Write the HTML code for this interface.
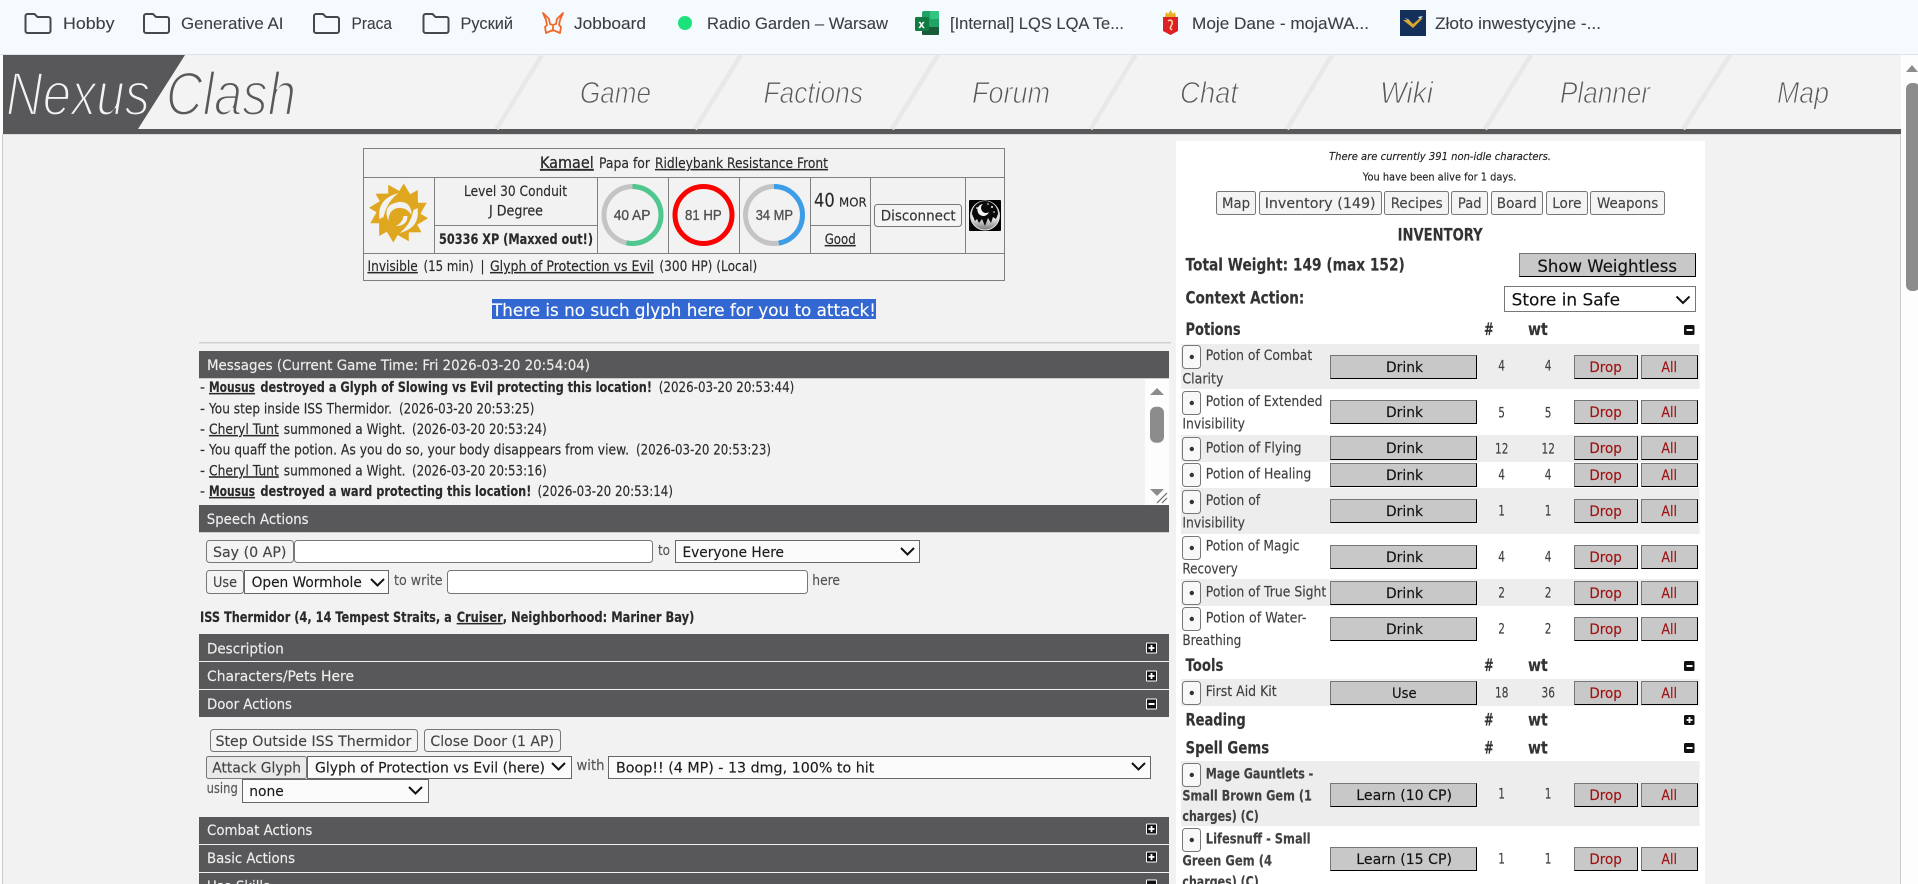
<!DOCTYPE html>
<html lang="en"><head><meta charset="utf-8"><title>Nexus Clash</title>
<style>
html,body{margin:0;padding:0;width:1918px;height:884px;overflow:hidden;background:#f2f2f2}
svg{display:block;position:absolute;left:0;top:0}
text{font-family:"DejaVu Sans","Noto Sans CJK SC",sans-serif;font-size:14px;color:#2a2a2a;fill:currentColor;stroke:currentColor;stroke-width:.15px;white-space:pre}
.bm{font-family:"Liberation Sans",sans-serif;font-size:16.500px;color:#3c4043;stroke-width:.1px}
.nav{font-family:"Liberation Sans",sans-serif;font-style:italic;font-size:31px;fill:#58585a;stroke:#f3f3f3;stroke-width:.95px}
.bar{fill:#58585a}
.bt{color:#eee;font-size:14.500px}
.b{font-weight:bold}
.u{text-decoration:underline}
.ring{font-family:"Liberation Sans",sans-serif;font-size:15px;color:#505050;stroke-width:.35px}
.ctl{font-size:14.500px;color:#1c1c1c}
.btn{font-size:14.500px;color:#444}
.h{font-weight:bold;font-size:16.500px;color:#333}
.i{color:#404040}
.c{color:#404040}
.r{color:#a01010;font-size:14.500px}
.k{color:#111;font-size:14.500px}
.box{fill:#f4f4f4;stroke:#777}
.inp{fill:#fff;stroke:#777}
.sel{fill:#fbfbfb;stroke:#666}
.chev{fill:none;stroke:#111;stroke-width:2}
</style></head><body>
<svg xmlns="http://www.w3.org/2000/svg" width="1918" height="884" viewBox="0 0 1918 884">
<defs>
<g id="fo"><path d="M1 4a2 2 0 0 1 2-2h7l3 3h11a2 2 0 0 1 2 2v12a2 2 0 0 1-2 2H3a2 2 0 0 1-2-2z" fill="none" stroke="#45494d" stroke-width="2"/></g>
<g id="bb">
<rect x="1330.500" y=".5" width="146" height="23" fill="#c8c8c8" stroke="#767676"/><path d="M1476.500 .5V23.500H1330.500" fill="none" stroke="#000"/>
<rect x="1574.500" y=".5" width="63" height="23" fill="#c8c8c8" stroke="#767676"/><path d="M1637.500 .5V23.500H1574.500" fill="none" stroke="#000"/>
<rect x="1641.500" y=".5" width="56" height="23" fill="#c8c8c8" stroke="#767676"/><path d="M1697.500 .5V23.500H1641.500" fill="none" stroke="#000"/>
</g>
<g id="sb"><rect x="1182.500" y=".5" width="18" height="23" rx="3" fill="#f8f8f8" stroke="#777"/><circle cx="1191.800" cy="12" r="2.200" fill="#333"/></g>
<g id="pl"><rect x="-.5" y="-.5" width="11" height="11" rx="1" fill="#fff"/><rect x=".5" y=".5" width="9" height="9" fill="#111"/><path d="M2 5h6M5 2v6" stroke="#fff" stroke-width="1.800"/></g>
<g id="mi"><rect x="-.5" y="-.5" width="11" height="11" rx="1" fill="#fff"/><rect x=".5" y=".5" width="9" height="9" fill="#111"/><path d="M2 5h6" stroke="#fff" stroke-width="2"/></g>
<g id="plr"><rect x="-.5" y="0" width="10.500" height="10" rx="1.500" fill="#111"/><path d="M2 5h6M5 2v6" stroke="#fff" stroke-width="1.800"/></g>
<g id="mir"><rect x="-.5" y="0" width="10.500" height="10" rx="1.500" fill="#111"/><path d="M2 5h6" stroke="#fff" stroke-width="2"/></g>
<linearGradient id="moon" x1="0" y1="0" x2="0" y2="1"><stop offset="0" stop-color="#999"/><stop offset=".6" stop-color="#e8e8e8"/><stop offset="1" stop-color="#777"/></linearGradient>
</defs>

<!-- browser bookmarks bar -->
<rect width="1918" height="54" fill="#f4fafd"/><rect y="54" width="1918" height="1.500" fill="#dbe4e8"/>
<use href="#fo" x="24.500" y="12"/><text class="bm" x="63" y="29" textLength="51.500" lengthAdjust="spacingAndGlyphs">Hobby</text>
<use href="#fo" x="143" y="12"/><text class="bm" x="181" y="29" textLength="102.500" lengthAdjust="spacingAndGlyphs">Generative AI</text>
<use href="#fo" x="313" y="12"/><text class="bm" x="351.500" y="29" textLength="40.500" lengthAdjust="spacingAndGlyphs">Praca</text>
<use href="#fo" x="422.500" y="12"/><text class="bm" x="460.500" y="29" textLength="52.500" lengthAdjust="spacingAndGlyphs">Руский</text>
<path d="M543 13l3 7 1 5-2 2 1 6 7-3 7 3 1-6-2-2 1-5 3-7-6 6-1 5-3 1-3-1-1-5z M553 26v5" fill="none" stroke="#f2682a" stroke-width="1.800" stroke-linejoin="round"/>
<text class="bm" x="574" y="29" textLength="72" lengthAdjust="spacingAndGlyphs">Jobboard</text>
<circle cx="685" cy="23" r="7" fill="#1de27c"/>
<text class="bm" x="707" y="29" textLength="181" lengthAdjust="spacingAndGlyphs">Radio Garden – Warsaw</text>
<rect x="922" y="11" width="17" height="24" rx="2" fill="#21a366"/><rect x="930" y="11" width="9" height="8" rx="1" fill="#33c481"/><rect x="922" y="27" width="17" height="8" rx="1" fill="#185c37"/>
<rect x="915" y="17" width="14" height="14" rx="1.500" fill="#107c41"/><text x="918.500" y="28" style="font-size:11px;color:#fff;font-family:'Liberation Sans',sans-serif;font-weight:bold">x</text>
<text class="bm" x="950" y="29" textLength="174" lengthAdjust="spacingAndGlyphs">[Internal] LQS LQA Te...</text>
<path d="M1165 17l1-5 2 2 2.500-4 2.500 4 2-2 1 5z" fill="#e8b020"/>
<path d="M1163 17h15v14l-7.500 4-7.500-4z" fill="#dd1f26"/><path d="M1168 21c3-2 5 0 4 3s-3 4 0 6" fill="none" stroke="#f3d9a0" stroke-width="1.600"/>
<text class="bm" x="1192" y="29" textLength="177" lengthAdjust="spacingAndGlyphs">Moje Dane - mojaWA...</text>
<rect x="1400" y="10" width="26" height="26" fill="#14305a"/><path d="M1403 20l10 8 10-10-4 1-6 5-4-4z" fill="#d9a92b"/><path d="M1404 18l4 1 2 2z M1418 17l5-1-3 3z" fill="#dfe6ee"/>
<text class="bm" x="1435" y="29" textLength="166" lengthAdjust="spacingAndGlyphs">Złoto inwestycyjne -...</text>

<!-- page frame -->
<rect x="0" y="55" width="3" height="829" fill="#fcfcfc"/><rect x="2" y="134" width="1" height="750" fill="#ccc"/>
<rect x="3" y="55" width="1898" height="74" fill="#f3f3f3"/>
<rect x="3" y="129" width="1898" height="5" fill="#58585a"/><rect x="3" y="134" width="1898" height="1" fill="#dcdcdc"/>
<rect x="1900" y="135" width="1" height="749" fill="#ccc"/>
<g stroke="#e8e8e8" stroke-width="4.500">
<path d="M496.500 129L542 55M695 129L741 55M892 129L938 55M1090.500 129L1135.500 55M1287 129L1332 55M1485 129L1531 55M1683 129L1730 55"/>
</g>
<path d="M3 55H185L138 129H3z" fill="#58585a"/>
<text x="6" y="115" textLength="144" lengthAdjust="spacingAndGlyphs" style="font-family:'Liberation Sans',sans-serif;font-style:italic;font-size:61px;fill:#f3f3f3;stroke:#58585a;stroke-width:2.200px">Nexus</text>
<text x="166" y="115" textLength="130" lengthAdjust="spacingAndGlyphs" style="font-family:'Liberation Sans',sans-serif;font-style:italic;font-size:61px;fill:#58585a;stroke:#f3f3f3;stroke-width:2.200px">Clash</text>
<text class="nav" x="580" y="103" textLength="71" lengthAdjust="spacingAndGlyphs">Game</text>
<text class="nav" x="763.500" y="103" textLength="99.500" lengthAdjust="spacingAndGlyphs">Factions</text>
<text class="nav" x="972" y="103" textLength="78" lengthAdjust="spacingAndGlyphs">Forum</text>
<text class="nav" x="1180" y="103" textLength="58" lengthAdjust="spacingAndGlyphs">Chat</text>
<text class="nav" x="1380" y="103" textLength="53" lengthAdjust="spacingAndGlyphs">Wiki</text>
<text class="nav" x="1560" y="103" textLength="90" lengthAdjust="spacingAndGlyphs">Planner</text>
<text class="nav" x="1777" y="103" textLength="52" lengthAdjust="spacingAndGlyphs">Map</text>

<!-- main scrollbar -->
<rect x="1901" y="55" width="17" height="829" fill="#fdfdfd"/>
<path d="M1912 65l6 7h-12z" fill="#8c8c8c"/>
<rect x="1906" y="83" width="14" height="208" rx="6" fill="#8c8c8c"/>

<!-- status table -->
<g fill="none" stroke="#808080">
<rect x="363.500" y="148.500" width="641" height="132"/>
<path d="M364 177.500H1004M364 253.500H1004M434.500 178V253M597.500 178V253M668.500 178V253M739.500 178V253M810.500 178V253M870.500 178V253M965.500 178V253M435 225.500H597M811 225.500H870"/>
</g>
<text x="540" y="168" class="u" textLength="53.700" lengthAdjust="spacingAndGlyphs" style="font-size:16px;stroke-width:.3px">Kamael</text>
<text x="599" y="168" textLength="51" lengthAdjust="spacingAndGlyphs">Papa for</text>
<text x="655" y="168" class="u" textLength="173" lengthAdjust="spacingAndGlyphs">Ridleybank Resistance Front</text>

<g transform="translate(368.500,183)">
<path d="M35.200 .5L41.700 11.300 49.300 7 49.400 19.700 58.200 19.700 52 30.800 59.500 35.200 48.700 41.700 53 49.300 40.300 49.400 40.300 58.200 29.200 52 24.800 59.500 18.300 48.700 10.700 53 10.600 40.300 1.800 40.300 8 29.200 .5 24.800 11.300 18.300 7 10.700 19.700 10.600 19.700 1.800 30.800 8z" fill="#dfa71f"/>
<circle cx="30" cy="30" r="22" fill="#dfa71f"/>
<g fill="#f2f2f2">
<path d="M11 36Q8 16 30 10Q19 18 15 34z"/>
<path d="M49 25Q52 45 31 50Q42 42 45 27z"/>
<path d="M20 38Q13 22 30 19Q43 18 43 32Q38 24 29 25Q20 27 20 38z"/>
<path d="M39 33Q39 43 27 43Q34 40 35 33z"/>
</g>
</g>

<text x="464" y="196" textLength="103" lengthAdjust="spacingAndGlyphs">Level 30 Conduit</text>
<text x="489" y="215.300" textLength="54" lengthAdjust="spacingAndGlyphs">J Degree</text>
<text x="439" y="244" class="b" textLength="154" lengthAdjust="spacingAndGlyphs">50336 XP (Maxxed out!)</text>

<g fill="none" stroke-width="5">
<circle cx="632.500" cy="215" r="28.500" stroke="#c4c4c4"/>
<circle cx="632.500" cy="215" r="28.500" stroke="#4ec88e" stroke-dasharray="95.500 179.100" transform="rotate(-90 632.500 215)"/>
<circle cx="703.500" cy="215" r="28.500" stroke="#fe0000"/>
<circle cx="774" cy="215" r="28.500" stroke="#c4c4c4"/>
<circle cx="774" cy="215" r="28.500" stroke="#3d9ee8" stroke-dasharray="84.600 179.100" transform="rotate(-90 774 215)"/>
</g>
<text class="ring" x="613.700" y="220" textLength="36.700" lengthAdjust="spacingAndGlyphs">40 AP</text>
<text class="ring" x="685" y="220" textLength="36.700" lengthAdjust="spacingAndGlyphs">81 HP</text>
<text class="ring" x="755.700" y="220" textLength="37.300" lengthAdjust="spacingAndGlyphs">34 MP</text>
<text x="814" y="206.700" textLength="20.700" lengthAdjust="spacingAndGlyphs" style="font-size:19px">40</text>
<text x="839" y="206.700" textLength="27.700" lengthAdjust="spacingAndGlyphs" style="font-size:12.500px">MOR</text>
<text x="824.700" y="244" class="u" textLength="31" lengthAdjust="spacingAndGlyphs">Good</text>
<rect x="874.500" y="204.500" width="87" height="22" rx="3" class="box"/>
<text class="btn" x="880.700" y="220.700" textLength="75" lengthAdjust="spacingAndGlyphs" style="color:#333">Disconnect</text>

<rect x="969" y="200" width="32" height="31" rx="1" fill="#000"/>
<circle cx="985" cy="215.500" r="14.500" fill="url(#moon)" stroke="#ddd" stroke-width="1"/>
<path d="M972 214a13 13 0 0 1 26 0l-2 5-3-2-2 6-3-5-3 8-3-7-3 4-2-4-2 2z" fill="#0a0a0a"/>
<path d="M983 204a6 6 0 1 0 6 8a5 5 0 1 1-6-8z" fill="#f2f2f2"/>
<circle cx="992" cy="207" r="1" fill="#fff"/><circle cx="977" cy="208" r=".9" fill="#fff"/><circle cx="994" cy="212" r=".8" fill="#fff"/><circle cx="988" cy="204" r=".8" fill="#fff"/>

<text x="367.500" y="271" class="u" textLength="50.300" lengthAdjust="spacingAndGlyphs">Invisible</text>
<text x="423.500" y="271" textLength="50.200" lengthAdjust="spacingAndGlyphs">(15 min)</text>
<text x="480.500" y="271" textLength="4" lengthAdjust="spacingAndGlyphs">|</text>
<text x="490" y="271" class="u" textLength="163.700" lengthAdjust="spacingAndGlyphs">Glyph of Protection vs Evil</text>
<text x="659.400" y="271" textLength="97.900" lengthAdjust="spacingAndGlyphs">(300 HP) (Local)</text>

<!-- selected message -->
<rect x="492" y="299" width="384" height="20" fill="#3367d1"/>
<text x="492" y="316" textLength="384" lengthAdjust="spacingAndGlyphs" style="font-size:17px;color:#fff">There is no such glyph here for you to attack!</text>
<rect x="199" y="342" width="972" height="1.500" fill="#d0d0d0"/>

<!-- messages -->
<rect class="bar" x="199" y="351" width="970" height="27"/><rect x="199" y="378" width="970" height="1" fill="#ccc"/>
<text class="bt" x="207" y="370" textLength="383" lengthAdjust="spacingAndGlyphs">Messages (Current Game Time: Fri 2026-03-20 20:54:04)</text>
<rect x="1145" y="379" width="24" height="126" fill="#fdfdfd"/>
<path d="M1157 388l7 7h-14z" fill="#8c8c8c"/>
<rect x="1150" y="406.700" width="14" height="36" rx="6" fill="#8c8c8c"/>
<path d="M1150 489h14l-7 7z" fill="#8c8c8c"/>
<path d="M1157 503l10-10M1162 503l5-5" stroke="#666" stroke-width="1.200"/>

<text x="200" y="392" textLength="5" lengthAdjust="spacingAndGlyphs">-</text>
<text x="209" y="392" class="b u" textLength="46" lengthAdjust="spacingAndGlyphs">Mousus</text>
<text x="260.400" y="392" class="b" textLength="391.600" lengthAdjust="spacingAndGlyphs">destroyed a Glyph of Slowing vs Evil protecting this location!</text>
<text x="658.800" y="392" textLength="135.500" lengthAdjust="spacingAndGlyphs">(2026-03-20 20:53:44)</text>
<text x="200" y="413.300" textLength="5" lengthAdjust="spacingAndGlyphs">-</text>
<text x="209" y="413.300" textLength="183" lengthAdjust="spacingAndGlyphs">You step inside ISS Thermidor.</text>
<text x="399" y="413.300" textLength="135.400" lengthAdjust="spacingAndGlyphs">(2026-03-20 20:53:25)</text>
<text x="200" y="434" textLength="5" lengthAdjust="spacingAndGlyphs">-</text>
<text x="209" y="434" class="u" textLength="69.800" lengthAdjust="spacingAndGlyphs">Cheryl Tunt</text>
<text x="283.800" y="434" textLength="121.700" lengthAdjust="spacingAndGlyphs">summoned a Wight.</text>
<text x="412" y="434" textLength="134.700" lengthAdjust="spacingAndGlyphs">(2026-03-20 20:53:24)</text>
<text x="200" y="454.700" textLength="5" lengthAdjust="spacingAndGlyphs">-</text>
<text x="209" y="454.700" textLength="420" lengthAdjust="spacingAndGlyphs">You quaff the potion. As you do so, your body disappears from view.</text>
<text x="636" y="454.700" textLength="135" lengthAdjust="spacingAndGlyphs">(2026-03-20 20:53:23)</text>
<text x="200" y="475.300" textLength="5" lengthAdjust="spacingAndGlyphs">-</text>
<text x="209" y="475.300" class="u" textLength="69.800" lengthAdjust="spacingAndGlyphs">Cheryl Tunt</text>
<text x="283.800" y="475.300" textLength="121.700" lengthAdjust="spacingAndGlyphs">summoned a Wight.</text>
<text x="412" y="475.300" textLength="134.700" lengthAdjust="spacingAndGlyphs">(2026-03-20 20:53:16)</text>
<text x="200" y="496" textLength="5" lengthAdjust="spacingAndGlyphs">-</text>
<text x="209" y="496" class="b u" textLength="46" lengthAdjust="spacingAndGlyphs">Mousus</text>
<text x="260.400" y="496" class="b" textLength="271" lengthAdjust="spacingAndGlyphs">destroyed a ward protecting this location!</text>
<text x="537.500" y="496" textLength="135.500" lengthAdjust="spacingAndGlyphs">(2026-03-20 20:53:14)</text>

<!-- speech -->
<rect class="bar" x="199" y="505" width="970" height="27"/><rect x="199" y="532" width="970" height="1" fill="#ccc"/>
<text class="bt" x="206.800" y="524" textLength="101.800" lengthAdjust="spacingAndGlyphs">Speech Actions</text>
<rect x="206.500" y="540.500" width="87" height="22" rx="3" class="box"/>
<text class="btn" x="213" y="557" textLength="73.400" lengthAdjust="spacingAndGlyphs">Say (0 AP)</text>
<rect x="294.500" y="540.500" width="358" height="22" rx="3" class="inp"/>
<text x="658" y="555" textLength="12" lengthAdjust="spacingAndGlyphs" style="color:#555">to</text>
<rect x="675.500" y="540.500" width="244" height="22" class="sel"/>
<text class="ctl" x="682.500" y="557" textLength="101.500" lengthAdjust="spacingAndGlyphs">Everyone Here</text>
<path class="chev" d="M901 548l6.500 6.500L914 548"/>
<rect x="206.500" y="570.500" width="37" height="23" rx="3" class="box"/>
<text class="btn" x="213" y="587" textLength="24" lengthAdjust="spacingAndGlyphs">Use</text>
<rect x="244.500" y="570.500" width="144" height="23" class="sel"/>
<text class="ctl" x="251.600" y="587" textLength="110.200" lengthAdjust="spacingAndGlyphs">Open Wormhole</text>
<path class="chev" d="M371 579l6.500 6.500L384 579"/>
<text x="394" y="585" textLength="48.600" lengthAdjust="spacingAndGlyphs" style="color:#555">to write</text>
<rect x="447.500" y="570.500" width="360" height="23" rx="3" class="inp"/>
<text x="812.300" y="585" textLength="27.700" lengthAdjust="spacingAndGlyphs" style="color:#555">here</text>

<text x="200" y="622" class="b" textLength="251.800" lengthAdjust="spacingAndGlyphs">ISS Thermidor (4, 14 Tempest Straits, a</text>
<text x="456.700" y="622" class="u" textLength="46" lengthAdjust="spacingAndGlyphs" style="font-weight:bold">Cruiser</text>
<text x="502.700" y="622" class="b" textLength="191.700" lengthAdjust="spacingAndGlyphs">, Neighborhood: Mariner Bay)</text>

<!-- section bars -->
<rect class="bar" x="199" y="634" width="970" height="27"/><rect class="bar" x="199" y="662" width="970" height="27"/><rect class="bar" x="199" y="690" width="970" height="27"/>
<rect class="bar" x="199" y="817" width="970" height="27"/><rect class="bar" x="199" y="845" width="970" height="27"/><rect class="bar" x="199" y="873" width="970" height="11"/>
<text class="bt" x="207" y="653.300" textLength="76.800" lengthAdjust="spacingAndGlyphs">Description</text>
<text class="bt" x="207" y="681" textLength="147" lengthAdjust="spacingAndGlyphs">Characters/Pets Here</text>
<text class="bt" x="207" y="709" textLength="85" lengthAdjust="spacingAndGlyphs">Door Actions</text>
<text class="bt" x="207" y="835" textLength="105.400" lengthAdjust="spacingAndGlyphs">Combat Actions</text>
<text class="bt" x="207" y="863" textLength="88" lengthAdjust="spacingAndGlyphs">Basic Actions</text>
<text class="bt" x="207" y="891" textLength="63" lengthAdjust="spacingAndGlyphs">Use Skills</text>
<use href="#pl" x="1146.500" y="643"/><use href="#pl" x="1146.500" y="671"/><use href="#mi" x="1146.500" y="699"/>
<use href="#pl" x="1146.500" y="824"/><use href="#pl" x="1146.500" y="852"/><use href="#mi" x="1146.500" y="880"/>

<!-- door actions -->
<rect x="210.500" y="729.500" width="207" height="22" rx="3" class="box"/>
<text class="btn" x="215.500" y="746" textLength="195.800" lengthAdjust="spacingAndGlyphs">Step Outside ISS Thermidor</text>
<rect x="424.500" y="729.500" width="136" height="22" rx="3" class="box"/>
<text class="btn" x="430.400" y="746" textLength="123.600" lengthAdjust="spacingAndGlyphs">Close Door (1 AP)</text>
<rect x="206.500" y="756.500" width="100" height="22" rx="2" fill="#e9e9e9" stroke="#777"/>
<text class="btn" x="212.300" y="772.700" textLength="88.700" lengthAdjust="spacingAndGlyphs">Attack Glyph</text>
<rect x="307.500" y="756.500" width="264" height="22" class="sel"/>
<text class="ctl" x="315" y="772.700" textLength="230" lengthAdjust="spacingAndGlyphs">Glyph of Protection vs Evil (here)</text>
<path class="chev" d="M552 763l6.500 6.500L565 763"/>
<text x="576.500" y="770" textLength="28" lengthAdjust="spacingAndGlyphs" style="color:#555">with</text>
<rect x="608.500" y="756.500" width="542" height="22" class="sel"/>
<text class="ctl" x="616" y="772.700" textLength="258.300" lengthAdjust="spacingAndGlyphs">Boop!! (4 MP) - 13 dmg, 100% to hit</text>
<path class="chev" d="M1132 763l6.500 6.500L1145 763"/>
<text x="206.600" y="793" textLength="31.200" lengthAdjust="spacingAndGlyphs" style="color:#555">using</text>
<rect x="242.500" y="779.500" width="186" height="23" class="sel"/>
<text class="ctl" x="249.300" y="796" textLength="34.500" lengthAdjust="spacingAndGlyphs">none</text>
<path class="chev" d="M409 787l6.500 6.500L422 787"/>

<!-- right panel -->
<rect x="1176" y="141" width="529" height="743" fill="#fff"/>
<text x="1329" y="160" textLength="222" lengthAdjust="spacingAndGlyphs" style="font-size:11px;font-style:italic;color:#222">There are currently 391 non-idle characters.</text>
<text x="1362.800" y="180.700" textLength="153.600" lengthAdjust="spacingAndGlyphs" style="font-size:11px;color:#222">You have been alive for 1 days.</text>
<rect x="1216.500" y="191.500" width="39" height="23" rx="2" class="box"/>
<rect x="1259.500" y="191.500" width="122" height="23" rx="2" class="box"/>
<rect x="1384.500" y="191.500" width="64" height="23" rx="2" class="box"/>
<rect x="1451.500" y="191.500" width="36" height="23" rx="2" class="box"/>
<rect x="1491.500" y="191.500" width="51" height="23" rx="2" class="box"/>
<rect x="1546.500" y="191.500" width="41" height="23" rx="2" class="box"/>
<rect x="1590.500" y="191.500" width="74" height="23" rx="2" class="box"/>
<text class="btn" x="1222" y="208" textLength="28" lengthAdjust="spacingAndGlyphs">Map</text>
<text class="btn" x="1264.700" y="208" textLength="110.900" lengthAdjust="spacingAndGlyphs">Inventory (149)</text>
<text class="btn" x="1390.700" y="208" textLength="52" lengthAdjust="spacingAndGlyphs">Recipes</text>
<text class="btn" x="1457.900" y="208" textLength="23.700" lengthAdjust="spacingAndGlyphs">Pad</text>
<text class="btn" x="1496.800" y="208" textLength="39.900" lengthAdjust="spacingAndGlyphs">Board</text>
<text class="btn" x="1552.200" y="208" textLength="29.300" lengthAdjust="spacingAndGlyphs">Lore</text>
<text class="btn" x="1597" y="208" textLength="61.300" lengthAdjust="spacingAndGlyphs">Weapons</text>
<text class="h" x="1397.600" y="240.700" textLength="85.100" lengthAdjust="spacingAndGlyphs">INVENTORY</text>
<text class="h" x="1185.500" y="270.700" textLength="219.300" lengthAdjust="spacingAndGlyphs">Total Weight: 149 (max 152)</text>
<rect x="1519.500" y="253.500" width="176" height="23" fill="#c8c8c8" stroke="#767676"/><path d="M1695.500 253.500V276.500H1519.500" fill="none" stroke="#000"/>
<text x="1537.400" y="272" textLength="139.600" lengthAdjust="spacingAndGlyphs" style="font-size:16.500px;color:#111">Show Weightless</text>
<text class="h" x="1185.500" y="303.300" textLength="118.800" lengthAdjust="spacingAndGlyphs">Context Action:</text>
<rect x="1504.500" y="286.500" width="191" height="25" fill="#fff" stroke="#777"/>
<text x="1511.600" y="305.700" textLength="108.400" lengthAdjust="spacingAndGlyphs" style="font-size:16.500px;color:#111">Store in Safe</text>
<path class="chev" d="M1676.500 296.500l6.500 6.500 6.500-6.500"/>

<text class="h" x="1185.500" y="335" textLength="55.100" lengthAdjust="spacingAndGlyphs">Potions</text>
<text class="h" x="1484" y="335" textLength="9.700" lengthAdjust="spacingAndGlyphs">#</text>
<text class="h" x="1528" y="335" textLength="19.800" lengthAdjust="spacingAndGlyphs">wt</text>
<use href="#mir" x="1684.500" y="325"/>

<!-- row backgrounds -->
<g fill="#ededed">
<rect x="1181" y="344" width="518.600" height="45"/>
<rect x="1181" y="435" width="518.600" height="27"/>
<rect x="1181" y="488" width="518.600" height="46"/>
<rect x="1181" y="579" width="518.600" height="27"/>
<rect x="1181" y="679" width="518.600" height="27"/>
<rect x="1181" y="761" width="518.600" height="65"/>
</g>
<use href="#sb" y="345"/><use href="#sb" y="391"/><use href="#sb" y="437"/><use href="#sb" y="463"/><use href="#sb" y="490"/><use href="#sb" y="536"/><use href="#sb" y="581"/><use href="#sb" y="607"/><use href="#sb" y="681"/><use href="#sb" y="763"/><use href="#sb" y="828"/>
<use href="#bb" y="355"/><use href="#bb" y="400"/><use href="#bb" y="436"/><use href="#bb" y="463"/><use href="#bb" y="499"/><use href="#bb" y="545"/><use href="#bb" y="581"/><use href="#bb" y="617"/><use href="#bb" y="681"/><use href="#bb" y="783"/><use href="#bb" y="847"/>

<!-- row 1 -->
<text class="i" x="1205.800" y="360" textLength="106.400" lengthAdjust="spacingAndGlyphs">Potion of Combat</text>
<text class="i" x="1182.400" y="383.300" textLength="41" lengthAdjust="spacingAndGlyphs">Clarity</text>
<text class="k" x="1386" y="372" textLength="37" lengthAdjust="spacingAndGlyphs">Drink</text>
<text class="c" x="1498.200" y="370.700" textLength="6.700" lengthAdjust="spacingAndGlyphs">4</text><text class="c" x="1544.700" y="370.700" textLength="6.700" lengthAdjust="spacingAndGlyphs">4</text>
<text class="r" x="1589.400" y="372" textLength="32.400" lengthAdjust="spacingAndGlyphs">Drop</text><text class="r" x="1661.400" y="372" textLength="15.600" lengthAdjust="spacingAndGlyphs">All</text>
<!-- row 2 -->
<text class="i" x="1205.800" y="406" textLength="116.700" lengthAdjust="spacingAndGlyphs">Potion of Extended</text>
<text class="i" x="1182.400" y="428.300" textLength="62.600" lengthAdjust="spacingAndGlyphs">Invisibility</text>
<text class="k" x="1386" y="417" textLength="37" lengthAdjust="spacingAndGlyphs">Drink</text>
<text class="c" x="1498.200" y="417.300" textLength="6.700" lengthAdjust="spacingAndGlyphs">5</text><text class="c" x="1544.700" y="417.300" textLength="6.700" lengthAdjust="spacingAndGlyphs">5</text>
<text class="r" x="1589.400" y="417" textLength="32.400" lengthAdjust="spacingAndGlyphs">Drop</text><text class="r" x="1661.400" y="417" textLength="15.600" lengthAdjust="spacingAndGlyphs">All</text>
<!-- row 3 -->
<text class="i" x="1205.800" y="452.700" textLength="95.700" lengthAdjust="spacingAndGlyphs">Potion of Flying</text>
<text class="k" x="1386" y="453" textLength="37" lengthAdjust="spacingAndGlyphs">Drink</text>
<text class="c" x="1495" y="453.300" textLength="13.400" lengthAdjust="spacingAndGlyphs">12</text><text class="c" x="1541.500" y="453.300" textLength="13.400" lengthAdjust="spacingAndGlyphs">12</text>
<text class="r" x="1589.400" y="453" textLength="32.400" lengthAdjust="spacingAndGlyphs">Drop</text><text class="r" x="1661.400" y="453" textLength="15.600" lengthAdjust="spacingAndGlyphs">All</text>
<!-- row 4 -->
<text class="i" x="1205.800" y="478.300" textLength="105.400" lengthAdjust="spacingAndGlyphs">Potion of Healing</text>
<text class="k" x="1386" y="480" textLength="37" lengthAdjust="spacingAndGlyphs">Drink</text>
<text class="c" x="1498.200" y="479.300" textLength="6.700" lengthAdjust="spacingAndGlyphs">4</text><text class="c" x="1544.700" y="479.300" textLength="6.700" lengthAdjust="spacingAndGlyphs">4</text>
<text class="r" x="1589.400" y="480" textLength="32.400" lengthAdjust="spacingAndGlyphs">Drop</text><text class="r" x="1661.400" y="480" textLength="15.600" lengthAdjust="spacingAndGlyphs">All</text>
<!-- row 5 -->
<text class="i" x="1205.800" y="505" textLength="54.400" lengthAdjust="spacingAndGlyphs">Potion of</text>
<text class="i" x="1182.400" y="527.300" textLength="62.600" lengthAdjust="spacingAndGlyphs">Invisibility</text>
<text class="k" x="1386" y="516" textLength="37" lengthAdjust="spacingAndGlyphs">Drink</text>
<text class="c" x="1498.200" y="515.300" textLength="6.700" lengthAdjust="spacingAndGlyphs">1</text><text class="c" x="1544.700" y="515.300" textLength="6.700" lengthAdjust="spacingAndGlyphs">1</text>
<text class="r" x="1589.400" y="516" textLength="32.400" lengthAdjust="spacingAndGlyphs">Drop</text><text class="r" x="1661.400" y="516" textLength="15.600" lengthAdjust="spacingAndGlyphs">All</text>
<!-- row 6 -->
<text class="i" x="1205.800" y="550.700" textLength="93.700" lengthAdjust="spacingAndGlyphs">Potion of Magic</text>
<text class="i" x="1182.400" y="573.300" textLength="55.400" lengthAdjust="spacingAndGlyphs">Recovery</text>
<text class="k" x="1386" y="562" textLength="37" lengthAdjust="spacingAndGlyphs">Drink</text>
<text class="c" x="1498.200" y="561.300" textLength="6.700" lengthAdjust="spacingAndGlyphs">4</text><text class="c" x="1544.700" y="561.300" textLength="6.700" lengthAdjust="spacingAndGlyphs">4</text>
<text class="r" x="1589.400" y="562" textLength="32.400" lengthAdjust="spacingAndGlyphs">Drop</text><text class="r" x="1661.400" y="562" textLength="15.600" lengthAdjust="spacingAndGlyphs">All</text>
<!-- row 7 -->
<text class="i" x="1205.800" y="596.700" textLength="120.500" lengthAdjust="spacingAndGlyphs">Potion of True Sight</text>
<text class="k" x="1386" y="598" textLength="37" lengthAdjust="spacingAndGlyphs">Drink</text>
<text class="c" x="1498.200" y="597.300" textLength="6.700" lengthAdjust="spacingAndGlyphs">2</text><text class="c" x="1544.700" y="597.300" textLength="6.700" lengthAdjust="spacingAndGlyphs">2</text>
<text class="r" x="1589.400" y="598" textLength="32.400" lengthAdjust="spacingAndGlyphs">Drop</text><text class="r" x="1661.400" y="598" textLength="15.600" lengthAdjust="spacingAndGlyphs">All</text>
<!-- row 8 -->
<text class="i" x="1205.800" y="622.300" textLength="100.600" lengthAdjust="spacingAndGlyphs">Potion of Water-</text>
<text class="i" x="1182.400" y="645" textLength="58.900" lengthAdjust="spacingAndGlyphs">Breathing</text>
<text class="k" x="1386" y="634" textLength="37" lengthAdjust="spacingAndGlyphs">Drink</text>
<text class="c" x="1498.200" y="633.300" textLength="6.700" lengthAdjust="spacingAndGlyphs">2</text><text class="c" x="1544.700" y="633.300" textLength="6.700" lengthAdjust="spacingAndGlyphs">2</text>
<text class="r" x="1589.400" y="634" textLength="32.400" lengthAdjust="spacingAndGlyphs">Drop</text><text class="r" x="1661.400" y="634" textLength="15.600" lengthAdjust="spacingAndGlyphs">All</text>

<!-- tools -->
<text class="h" x="1185.500" y="671" textLength="37.900" lengthAdjust="spacingAndGlyphs">Tools</text>
<text class="h" x="1484" y="671" textLength="9.700" lengthAdjust="spacingAndGlyphs">#</text>
<text class="h" x="1528" y="671" textLength="19.800" lengthAdjust="spacingAndGlyphs">wt</text>
<use href="#mir" x="1684.500" y="661"/>
<text class="i" x="1205.800" y="696" textLength="70.900" lengthAdjust="spacingAndGlyphs">First Aid Kit</text>
<text class="k" x="1392" y="698" textLength="24.600" lengthAdjust="spacingAndGlyphs">Use</text>
<text class="c" x="1495" y="697.300" textLength="13.400" lengthAdjust="spacingAndGlyphs">18</text><text class="c" x="1541.500" y="697.300" textLength="13.400" lengthAdjust="spacingAndGlyphs">36</text>
<text class="r" x="1589.400" y="698" textLength="32.400" lengthAdjust="spacingAndGlyphs">Drop</text><text class="r" x="1661.400" y="698" textLength="15.600" lengthAdjust="spacingAndGlyphs">All</text>

<!-- reading -->
<text class="h" x="1185.500" y="725.300" textLength="60.300" lengthAdjust="spacingAndGlyphs">Reading</text>
<text class="h" x="1484" y="725.300" textLength="9.700" lengthAdjust="spacingAndGlyphs">#</text>
<text class="h" x="1528" y="725.300" textLength="19.800" lengthAdjust="spacingAndGlyphs">wt</text>
<use href="#plr" x="1684.500" y="715"/>

<!-- spell gems -->
<text class="h" x="1185.500" y="753.300" textLength="83.700" lengthAdjust="spacingAndGlyphs">Spell Gems</text>
<text class="h" x="1484" y="753.300" textLength="9.700" lengthAdjust="spacingAndGlyphs">#</text>
<text class="h" x="1528" y="753.300" textLength="19.800" lengthAdjust="spacingAndGlyphs">wt</text>
<use href="#mir" x="1684.500" y="743"/>
<text class="i b" x="1205.800" y="778.300" textLength="107.500" lengthAdjust="spacingAndGlyphs">Mage Gauntlets -</text>
<text class="i b" x="1182.400" y="800.700" textLength="129.500" lengthAdjust="spacingAndGlyphs">Small Brown Gem (1</text>
<text class="i b" x="1182.400" y="821" textLength="76.400" lengthAdjust="spacingAndGlyphs">charges) (C)</text>
<text class="k" x="1356.300" y="800" textLength="95.700" lengthAdjust="spacingAndGlyphs">Learn (10 CP)</text>
<text class="c" x="1498.200" y="798.300" textLength="6.700" lengthAdjust="spacingAndGlyphs">1</text><text class="c" x="1544.700" y="798.300" textLength="6.700" lengthAdjust="spacingAndGlyphs">1</text>
<text class="r" x="1589.400" y="800" textLength="32.400" lengthAdjust="spacingAndGlyphs">Drop</text><text class="r" x="1661.400" y="800" textLength="15.600" lengthAdjust="spacingAndGlyphs">All</text>
<text class="i b" x="1205.800" y="843.300" textLength="104.700" lengthAdjust="spacingAndGlyphs">Lifesnuff - Small</text>
<text class="i b" x="1182.400" y="865.300" textLength="89.600" lengthAdjust="spacingAndGlyphs">Green Gem (4</text>
<text class="i b" x="1182.400" y="886.500" textLength="76.400" lengthAdjust="spacingAndGlyphs">charges) (C)</text>
<text class="k" x="1356.300" y="864" textLength="95.700" lengthAdjust="spacingAndGlyphs">Learn (15 CP)</text>
<text class="c" x="1498.200" y="863.300" textLength="6.700" lengthAdjust="spacingAndGlyphs">1</text><text class="c" x="1544.700" y="863.300" textLength="6.700" lengthAdjust="spacingAndGlyphs">1</text>
<text class="r" x="1589.400" y="864" textLength="32.400" lengthAdjust="spacingAndGlyphs">Drop</text><text class="r" x="1661.400" y="864" textLength="15.600" lengthAdjust="spacingAndGlyphs">All</text>
</svg>
</body></html>
